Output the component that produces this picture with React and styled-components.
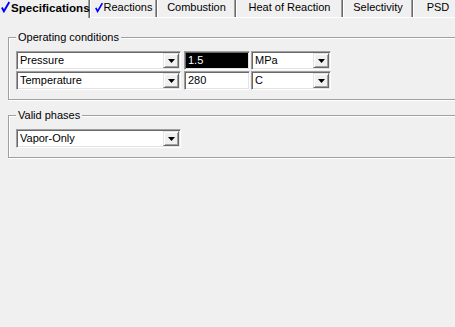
import styled, { createGlobalStyle } from "styled-components";

const GlobalStyle = createGlobalStyle`
  html, body {
    margin: 0;
    padding: 0;
    background: #f0f0f0;
  }
  body {
    font-family: "Liberation Sans", Arial, sans-serif;
    font-size: 11px;
    color: #000;
  }
`;

const tabs = [
  { label: "Specifications", width: 90, checked: true, active: true },
  { label: "Reactions", width: 67, checked: true },
  { label: "Combustion", width: 79 },
  { label: "Heat of Reaction", width: 107 },
  { label: "Selectivity", width: 70 },
  { label: "PSD", width: 50 },
];

const Check = ({ big }) => (
  <CheckIcon width={big ? 9 : 8} height={big ? 12 : 11} viewBox="0 0 9 11">
    <path d="M0.9 6 L2.9 9.8 L8.3 0.6" fill="none" stroke="#0000ff" strokeWidth="1.9" />
  </CheckIcon>
);

const Arrow = () => (
  <svg width="7" height="4" viewBox="0 0 7 4">
    <path d="M0 0 H7 L3.5 4 Z" fill="#000" />
  </svg>
);

const Combo = ({ value, width }) => (
  <Field $width={width}>
    <FieldText>{value}</FieldText>
    <DropButton>
      <Arrow />
    </DropButton>
  </Field>
);

const App = () => (
  <Page>
    <GlobalStyle />
    <TabStrip>
      {tabs.map((t) => (
        <Tab key={t.label} $width={t.width} $active={t.active}>
          {t.checked && <Check big={t.active} />}
          <span>{t.label}</span>
        </Tab>
      ))}
    </TabStrip>
    <Panel>
      <Group>
        <Legend>Operating conditions</Legend>
        <Rows>
          <Row>
            <Combo value="Pressure" width={165} />
            <ValueBox $selected>1.5</ValueBox>
            <Combo value="MPa" width={80} />
          </Row>
          <Row>
            <Combo value="Temperature" width={165} />
            <ValueBox>280</ValueBox>
            <Combo value="C" width={80} />
          </Row>
        </Rows>
      </Group>
      <Group>
        <Legend>Valid phases</Legend>
        <Rows>
          <Row>
            <Combo value="Vapor-Only" width={165} />
          </Row>
        </Rows>
      </Group>
    </Panel>
  </Page>
);

const Page = styled.div`
  width: 455px;
  height: 327px;
  overflow: hidden;
  background: #f0f0f0;
`;

const TabStrip = styled.div`
  display: flex;
  height: 17px;
  border-bottom: 1px solid #fff;
`;

const CheckIcon = styled.svg`
  flex-shrink: 0;
`;

const Tab = styled.div`
  flex: 0 0 auto;
  box-sizing: border-box;
  width: ${(p) => p.$width}px;
  height: ${(p) => (p.$active ? 18 : 17)}px;
  margin-bottom: ${(p) => (p.$active ? -1 : 0)}px;
  display: flex;
  align-items: center;
  justify-content: center;
  gap: 1px;
  padding-bottom: 3px;
  background: #f0f0f0;
  border-left: 1px solid ${(p) => (p.$active ? "transparent" : "#fff")};
  border-right: 1px solid #696969;
  box-shadow: inset -1px 0 #a0a0a0;
  font-weight: ${(p) => (p.$active ? "bold" : "normal")};
  font-size: ${(p) => (p.$active ? "11.6px" : "11px")};
  white-space: nowrap;
  position: relative;
  z-index: ${(p) => (p.$active ? 1 : 0)};

  &:first-child {
    justify-content: flex-start;
    padding-left: 0;
    padding-bottom: 4px;
  }
`;

const Panel = styled.div`
  display: flex;
  flex-direction: column;
  gap: 15px;
  padding: 19px 0 0 8px;
`;

const Group = styled.div`
  width: 470px;
  border: 1px solid #a0a0a0;
  box-shadow: inset 1px 1px #fff, 1px 1px #fff;
  display: flex;
  flex-direction: column;
`;

const Legend = styled.span`
  align-self: flex-start;
  margin: -7px 0 0 7px;
  padding: 0 2px;
  line-height: 13px;
  background: #f0f0f0;
`;

const Rows = styled.div`
  display: flex;
  flex-direction: column;
  gap: 1px;
  padding: 7px 0 9px 7px;
`;

const Row = styled.div`
  display: flex;
  gap: 1px;

  & > :first-child {
    margin-right: 2px;
  }
`;

const sunken = `
  box-sizing: border-box;
  height: 19px;
  border: 1px solid;
  border-color: #a0a0a0 #fff #fff #a0a0a0;
  box-shadow: inset 1px 1px #696969, inset -1px -1px #e3e3e3;
`;

const Field = styled.div`
  ${sunken}
  width: ${(p) => p.$width}px;
  background: #fff;
  display: flex;
  align-items: center;
  padding: 1px;
`;

const FieldText = styled.span`
  flex: 1;
  padding-left: 2px;
  line-height: 15px;
`;

const DropButton = styled.div`
  box-sizing: border-box;
  width: 16px;
  height: 15px;
  background: #f0f0f0;
  border: 1px solid;
  border-color: #e3e3e3 #696969 #696969 #e3e3e3;
  box-shadow: inset 1px 1px #fff, inset -1px -1px #a0a0a0;
  display: flex;
  align-items: center;
  justify-content: center;
  padding-top: 1px;
`;

const ValueBox = styled.div`
  ${sunken}
  width: 66px;
  padding: 1px 1px 1px 3px;
  line-height: 15px;
  background: ${(p) => (p.$selected ? "#000" : "#fff")};
  color: ${(p) => (p.$selected ? "#fff" : "#000")};
`;

export default App;
